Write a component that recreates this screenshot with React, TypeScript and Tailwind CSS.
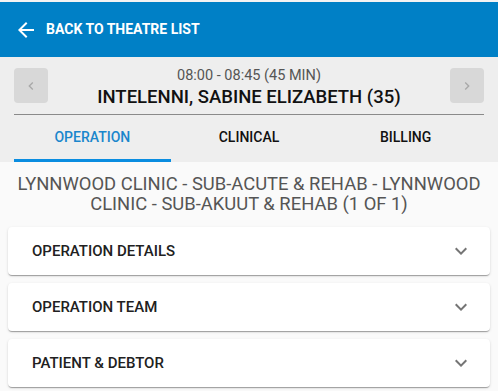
import React from "react";

function Chevron() {
  return (
    <svg width="24" height="24" viewBox="0 0 24 24" className="text-[#757575]">
      <path d="M7.41 8.59 12 13.17l4.59-4.58L18 10l-6 6-6-6 1.41-1.41z" fill="currentColor" />
    </svg>
  );
}

function Card({ title }: { title: string }) {
  return (
    <div className="mx-2 h-12 bg-white rounded-[4px] shadow-[0_2px_1px_-1px_rgba(0,0,0,0.2),0_1px_1px_0_rgba(0,0,0,0.14),0_1px_3px_0_rgba(0,0,0,0.12)] flex items-center justify-between pl-6 pr-[17px]">
      <span className="text-[15px] font-medium text-[#212121]">{title}</span>
      <Chevron />
    </div>
  );
}

export default function App() {
  return (
    <div className="w-[498px] h-[391px] overflow-hidden bg-[#fafafa]" style={{ fontFamily: "Roboto, 'Liberation Sans', sans-serif" }}>
      <div className="h-[2px] bg-[#f3f3f3]" />
      <div className="h-[55px] bg-[#0080c6] flex items-center pl-[14px]">
        <svg width="24" height="24" viewBox="0 0 24 24">
          <path d="M20 11H7.83l5.59-5.59L12 4l-8 8 8 8 1.41-1.41L7.83 13H20v-2z" fill="white" />
        </svg>
        <span className="ml-2 text-white font-bold text-[14px]">BACK TO THEATRE LIST</span>
      </div>
      <div className="bg-[#eeeeee] px-[14px] pt-[11px]">
        <div className="flex items-start justify-between border-b border-[#8a8a8a] pb-[6px]">
          <div className="w-[34px] h-[35px] rounded-[4px] bg-[#d8d8d8] flex items-center justify-center">
            <svg width="16" height="16" viewBox="0 0 24 24">
              <path d="M15.41 7.41 14 6l-6 6 6 6 1.41-1.41L10.83 12z" fill="#a8a8a8" />
            </svg>
          </div>
          <div className="flex flex-col items-center">
            <div className="text-[14.5px] leading-[15px] text-[#555555]">08:00 - 08:45 (45 MIN)</div>
            <div className="text-[18.5px] leading-[22px] mt-[3px] font-medium text-[#111111]">INTELENNI, SABINE ELIZABETH (35)</div>
          </div>
          <div className="w-[34px] h-[35px] rounded-[4px] bg-[#d8d8d8] flex items-center justify-center">
            <svg width="16" height="16" viewBox="0 0 24 24">
              <path d="M8.59 16.59 10 18l6-6-6-6-1.41 1.41L13.17 12z" fill="#a8a8a8" />
            </svg>
          </div>
        </div>
        <div className="grid grid-cols-3 h-[47px]">
          <div className="flex flex-col">
            <div className="flex-1 flex items-center justify-center text-[14px] font-medium text-[#1a86cc]">OPERATION</div>
            <div className="h-[3px] bg-[#0a8de0]" />
          </div>
          <div className="flex items-center justify-center text-[14px] font-medium text-[#111111] pb-[3px]">CLINICAL</div>
          <div className="flex items-center justify-center text-[14px] font-medium text-[#111111] pb-[3px]">BILLING</div>
        </div>
      </div>
      <div className="px-3 pt-[12px] pb-[13px] text-center text-[18.4px] leading-[20px] text-[#555555]">
        LYNNWOOD CLINIC - SUB-ACUTE &amp; REHAB - LYNNWOOD CLINIC - SUB-AKUUT &amp; REHAB (1 OF 1)
      </div>
      <div className="flex flex-col gap-2">
        <Card title="OPERATION DETAILS" />
        <Card title="OPERATION TEAM" />
        <Card title="PATIENT & DEBTOR" />
      </div>
    </div>
  );
}
